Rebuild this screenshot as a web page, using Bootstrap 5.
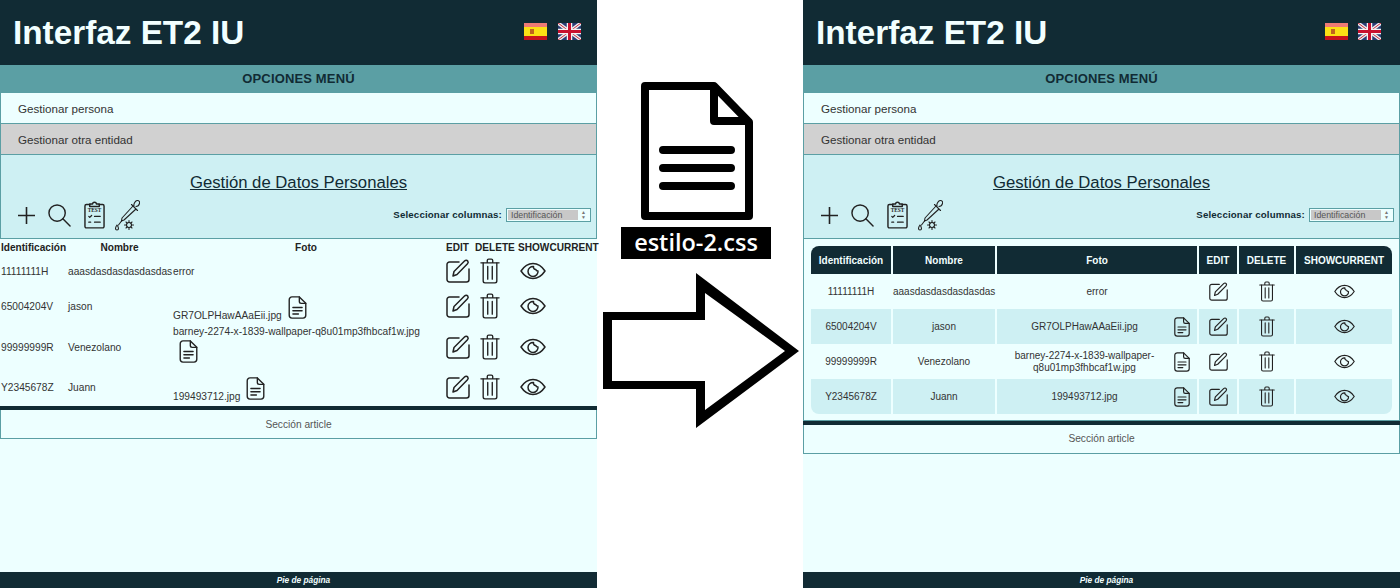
<!DOCTYPE html>
<html lang="es">
<head>
  <meta charset="UTF-8" />
  <meta name="viewport" content="width=device-width, initial-scale=1" />
  <title>Interfaz ET2 IU</title>
  <link href="https://cdn.jsdelivr.net/npm/bootstrap@5.3.6/dist/css/bootstrap.min.css" rel="stylesheet"/>

  <style>
    body {
      background-color: #fff;
      height: 588px;
      overflow: hidden;
      font-family: "Liberation Sans", Arial, sans-serif;
      font-size: 11px;
      color: #333;
    }

    .panel-ui { width: 597px; height: 588px; background-color: #edffff; }
    .mid-col { width: 206px; }

    .cabecera { height: 65px; background-color: #112b34; color: #f2ffff; padding: 0 16px 0 13px; }
    .cabecera h1 { font-size: 33.3px; font-weight: 700; margin: 0; }
    .banderas { gap: 11px; margin-top: -2px; }
    .cabecera-b { padding-right: 19px; }
    .cabecera-b .banderas { gap: 10px; }

    .titulo-menu { height: 28px; background-color: #5b9fa4; color: #112b34; font-size: 13px; font-weight: 700; letter-spacing: .15px; }
    .item-menu { height: 31px; padding: 1px 0 0 17px; border: 1px solid #5b9fa4; border-top: 0; font-size: 11.6px; }
    .item-gris { background-color: #d1d1d1; }

    .zona-gestion { height: 84px; background-color: #cef0f3; border: 1px solid #5b9fa4; border-top: 0; color: #112b34; }
    .zona-gestion h2 { font-size: 16.7px; font-weight: 400; text-decoration: underline; text-align: center; margin: 18px 0 9px; line-height: 19px; }
    .barra-iconos { padding: 0 5px 0 17px; }
    .barra-iconos .grupo { gap: 9px; margin-top: -2px; }
    .lado-selector { margin-top: -2px; }
    .selector-txt { font-size: 9.7px; font-weight: 700; letter-spacing: .15px; margin-right: 4px; }
    .selector { width: 85px; height: 14px; background: #edffff; border: 1px solid #5b9fa4; padding: 1px; font-size: 8.8px; color: #555; }
    .selector span { background: #c8c8c8; padding-left: 3px; line-height: 10px; }
    .selector i { width: 11px; font-style: normal; font-size: 5px; line-height: 5px; color: #777; text-align: center; }

    .tabla-vieja { width: 597px; border-collapse: collapse; font-size: 10.2px; table-layout: fixed; }
    .tabla-vieja th { font-size: 10.1px; padding: 0 1px; height: 17px; color: #222; }
    .tabla-vieja td { padding: 0 1px; vertical-align: middle; white-space: nowrap; }
    .tabla-vieja td:nth-child(-n+2), .tabla-vieja .fila-1 td:nth-child(3) { padding-top: 2px; }
    .tabla-vieja .fila-1 { height: 30px; }
    .tabla-vieja .fila-2 { height: 40px; }
    .tabla-vieja .fila-3 { height: 42px; }
    .tabla-vieja .fila-4 { height: 38px; }
    .col-id { width: 67px; }
    .col-nombre { width: 105px; }
    .col-foto { width: 273px; padding-right: 6px !important; }
    .col-edit { width: 29px; }
    .col-delete { width: 43px; }
    .col-show { width: 80px; }
    .celda-borrar { padding-left: 6px !important; }
    .celda-ojo { padding-left: 3px !important; }
    .tabla-vieja .foto-bajo { padding-top: 8px; }
    .tabla-vieja .foto-arriba { padding-bottom: 5px; line-height: 12px; }
    .fich-linea { vertical-align: baseline; margin-left: 6px; }
    .fich-abajo { display: block; margin: 2px 0 0 6px; }

    .raya { height: 4px; background-color: #112b34; flex: none; }
    .seccion { height: 29px; padding-top: 1px; border: 1px solid #5b9fa4; border-top: 0; font-size: 10.2px; color: #555; }
    .seccion-b { padding-top: 0; }

    .marco-tabla { padding: 7px 7px 6px; border: 1px solid #5b9fa4; border-top: 0; }
    .tabla-nueva { width: 100%; border-collapse: separate; border-spacing: 0; font-size: 10px; table-layout: fixed; }
    .tabla-nueva th { background-color: #112b34; color: #f2ffff; height: 28px; font-size: 10px; text-align: center; border-right: 2px solid #edffff; padding: 0; }
    .tabla-nueva th:first-child { border-top-left-radius: 8px; }
    .tabla-nueva th:last-child { border-top-right-radius: 8px; border-right: 0; }
    .tabla-nueva td { text-align: center; vertical-align: middle; padding: 0 2px; height: 35px; border-right: 2px solid #edffff; line-height: 12px; }
    .tabla-nueva td:last-child { border-right: 0; }
    .tabla-nueva tr:nth-child(even) td { background-color: #cef0f3; }
    .tabla-nueva tr:last-child td:first-child { border-bottom-left-radius: 8px; }
    .tabla-nueva tr:last-child td:last-child { border-bottom-right-radius: 8px; }
    .col2-id { width: 82px; }
    .col2-nombre { width: 104px; }
    .col2-foto { width: 202px; }
    .col2-edit { width: 40px; }
    .col2-delete { width: 57px; }
    .celda-foto { gap: 4px; padding-right: 5px; }
    .celda-foto span { flex: 1; }

    .pie { height: 16px; padding-left: 10px; background-color: #112b34; color: #f2ffff; font-size: 8.3px; font-weight: 700; font-style: italic; }

    .doc-grande { margin: 82px 0 0 44px; }
    .etiqueta-css { width: 150px; height: 32px; background: #000; color: #fff; font-family: "Open Sans", sans-serif; font-size: 23.5px; font-weight: 600; margin: 7px 0 14px 24px; }
    .flecha { margin-left: 6px; }
    .ico { fill: none; stroke: #222; stroke-width: 1.5; stroke-linecap: round; stroke-linejoin: round; }
    .ico-fino { stroke-width: 1.1; }
    .txt-test { font-family: "Liberation Serif", serif; font-size: 5.5px; font-weight: 700; fill: #222; stroke: none; }
  </style>
</head>

<body>
  <svg width="0" height="0" class="d-none">
    <symbol id="i-mas" viewBox="0 0 16 16"><path d="M8 0v16M0 8h16"/></symbol>
    <symbol id="i-lupa" viewBox="0 0 24 24"><circle cx="9.500" cy="9.500" r="8.500"/><path d="M15.500 15.500L23 23"/></symbol>
    <symbol id="i-test" viewBox="0 0 22 29"><path d="M6 3.500H2.500a1.500 1.500 0 0 0-1.500 1.500v21.500a1.500 1.500 0 0 0 1.500 1.500h17a1.500 1.500 0 0 0 1.500-1.500V5a1.500 1.500 0 0 0-1.500-1.500H16"/><path d="M6 5.500V3h3c0-2.500 4-2.500 4 0h3v2.500z"/><text class="txt-test" x="11" y="11.500" text-anchor="middle">TEST</text><path d="M5 16l1 1 2-2M11 16h6M5 22h2M11 22h6" stroke-width="1.300"/></symbol>
    <symbol id="i-pipeta" viewBox="0 0 26 32"><path d="M8 19L19 7l3 3-12 11-2.500 1zM17.500 5.500l6 6M20 7c-.5-2 1-5 3-5.500 2-.4 3 1.500 2.500 3-.4 1.500-2 3-3.500 3"/><path d="M7.500 22l-3 4"/><path d="M3 26c-2 2.500-2 5 0 5s2-2.500 0-5z"/><circle cx="15" cy="26" r="2.500"/><path d="M15 21.500v2M15 28.500v2M10.500 26h2M17.500 26h2M12 23l1.200 1.200M16.800 27.800L18 29M18 23l-1.200 1.200M13.200 27.800L12 29"/></symbol>
    <symbol id="i-editar" viewBox="0 0 24 24"><path d="M13 3H3.500A2.500 2.500 0 0 0 1 5.500v15A2.500 2.500 0 0 0 3.500 23h17a2.500 2.500 0 0 0 2.500-2.500V10"/><path d="M7 17l1-4.500L18.500 2c1-1 2.500-1 3.200 0s.6 2-.2 2.800L11 15.500z"/></symbol>
    <symbol id="i-borrar" viewBox="0 0 22 28"><path d="M1 5h20M8 5V2.500C8 1.500 8.500 1 9.500 1h3c1 0 1.500.5 1.500 1.500V5"/><path d="M3.500 5v20a2 2 0 0 0 2 2h11a2 2 0 0 0 2-2V5"/><path d="M8.500 9v14M13.500 9v14"/></symbol>
    <symbol id="i-ojo" viewBox="0 0 26 18"><path d="M1 9c3-4.500 7-7.500 12-7.500S22 4.500 25 9c-3 4.500-7 7.500-12 7.500S4 13.500 1 9z"/><path d="M13.500 4.500A5 5 0 1 0 18 9c-1.500 0-2-.5-2.200-1.500-1.500 0-2.500-1-2.300-3z"/></symbol>
    <symbol id="i-fichero" viewBox="0 0 20 25"><path d="M4 1h8l7 7v13a3 3 0 0 1-3 3H4a3 3 0 0 1-3-3V4a3 3 0 0 1 3-3z"/><path d="M12 1v5a2 2 0 0 0 2 2h5"/><path d="M5 12.500h10M5 16h10M5 19.500h6"/></symbol>
    <symbol id="b-es" viewBox="0 0 23 17"><rect width="23" height="17" fill="#c8141c"/><rect width="23" height="4" fill="#ef7a74"/><rect y="4" width="23" height="9" fill="#fbe014"/><rect x="6" y="6" width="4" height="5" fill="#c0641c"/></symbol>
    <symbol id="b-uk" viewBox="0 0 23 17"><rect width="23" height="17" fill="#2a3c74"/><path d="M0 0l23 17M23 0L0 17" stroke="#eee" stroke-width="3.500"/><path d="M0 0l23 17M23 0L0 17" stroke="#c8283c" stroke-width="1"/><path d="M11.500 0v17M0 8.500h23" stroke="#f4f4f4" stroke-width="5.500"/><path d="M11.500 0v17M0 8.500h23" stroke="#c8102e" stroke-width="3"/></symbol>
  </svg>

  <div class="d-flex">

    <!-- Antes -->
    <div class="panel-ui d-flex flex-column">
      <header class="cabecera d-flex justify-content-between align-items-center">
        <h1>Interfaz ET2 IU</h1>
        <div class="banderas d-flex">
          <svg width="23" height="17"><use href="#b-es"/></svg>
          <svg width="23" height="17"><use href="#b-uk"/></svg>
        </div>
      </header>
      <div class="titulo-menu d-flex align-items-center justify-content-center">OPCIONES MENÚ</div>
      <div class="item-menu d-flex align-items-center">Gestionar persona</div>
      <div class="item-menu item-gris d-flex align-items-center">Gestionar otra entidad</div>
      <section class="zona-gestion">
        <h2>Gestión de Datos Personales</h2>
        <div class="barra-iconos d-flex justify-content-between align-items-center">
          <div class="grupo d-flex align-items-center">
            <svg class="ico" width="17" height="17"><use href="#i-mas"/></svg>
            <svg class="ico ms-1" width="23" height="23"><use href="#i-lupa"/></svg>
            <svg class="ico ms-1" width="21" height="28"><use href="#i-test"/></svg>
            <svg class="ico ico-fino" width="26" height="32"><use href="#i-pipeta"/></svg>
          </div>
          <div class="lado-selector d-flex align-items-center">
            <span class="selector-txt">Seleccionar columnas:</span>
            <div class="selector d-flex">
              <span class="flex-grow-1">Identificación</span>
              <i class="d-flex flex-column justify-content-center">▲<br>▼</i>
            </div>
          </div>
        </div>
      </section>
      <table class="tabla-vieja">
        <thead>
          <tr>
            <th class="col-id">Identificación</th>
            <th class="col-nombre text-center">Nombre</th>
            <th class="col-foto text-center">Foto</th>
            <th class="col-edit">EDIT</th>
            <th class="col-delete">DELETE</th>
            <th class="col-show">SHOWCURRENT</th>
          </tr>
        </thead>
        <tbody>
          <tr class="fila-1">
            <td>11111111H</td><td>aaasdasdasdasdasdas</td><td>error</td>
            <td><svg class="ico" width="24" height="24"><use href="#i-editar"/></svg></td>
            <td class="celda-borrar"><svg class="ico" width="20" height="26"><use href="#i-borrar"/></svg></td>
            <td class="celda-ojo"><svg class="ico" width="26" height="18"><use href="#i-ojo"/></svg></td>
          </tr>
          <tr class="fila-2">
            <td>65004204V</td><td>jason</td><td class="foto-bajo">GR7OLPHawAAaEii.jpg<svg class="ico fich-linea" width="19" height="23"><use href="#i-fichero"/></svg></td>
            <td><svg class="ico" width="24" height="24"><use href="#i-editar"/></svg></td>
            <td class="celda-borrar"><svg class="ico" width="20" height="26"><use href="#i-borrar"/></svg></td>
            <td class="celda-ojo"><svg class="ico" width="26" height="18"><use href="#i-ojo"/></svg></td>
          </tr>
          <tr class="fila-3">
            <td>99999999R</td><td>Venezolano</td><td class="foto-arriba">barney-2274-x-1839-wallpaper-q8u01mp3fhbcaf1w.jpg<svg class="ico fich-abajo" width="19" height="23"><use href="#i-fichero"/></svg></td>
            <td><svg class="ico" width="24" height="24"><use href="#i-editar"/></svg></td>
            <td class="celda-borrar"><svg class="ico" width="20" height="26"><use href="#i-borrar"/></svg></td>
            <td class="celda-ojo"><svg class="ico" width="26" height="18"><use href="#i-ojo"/></svg></td>
          </tr>
          <tr class="fila-4">
            <td>Y2345678Z</td><td>Juann</td><td class="foto-bajo">199493712.jpg<svg class="ico fich-linea" width="19" height="23"><use href="#i-fichero"/></svg></td>
            <td><svg class="ico" width="24" height="24"><use href="#i-editar"/></svg></td>
            <td class="celda-borrar"><svg class="ico" width="20" height="26"><use href="#i-borrar"/></svg></td>
            <td class="celda-ojo"><svg class="ico" width="26" height="18"><use href="#i-ojo"/></svg></td>
          </tr>
        </tbody>
      </table>
      <div class="raya"></div>
      <div class="seccion d-flex align-items-center justify-content-center">Sección article</div>
      <footer class="pie mt-auto d-flex align-items-center justify-content-center">Pie de página</footer>
    </div>

    <!-- Centro -->
    <div class="mid-col d-flex flex-column align-items-start">
      <svg class="doc-grande" width="112" height="138" viewBox="0 0 112 138">
        <path d="M4 4h69l35 36v94H4z" fill="#fff" stroke="#000" stroke-width="8" stroke-linejoin="round"/>
        <path d="M73 4v35h35" fill="none" stroke="#000" stroke-width="8" stroke-linejoin="round"/>
        <path d="M22 68h68M22 86h68M22 104h68" stroke="#000" stroke-width="8" stroke-linecap="round"/>
      </svg>
      <div class="etiqueta-css d-flex align-items-center justify-content-center">estilo-2.css</div>
      <svg class="flecha" width="197" height="156" viewBox="0 0 197 156">
        <path fill-rule="evenodd" d="M0 39h93V0l103 78L93 155v-39H0zM9 47v61h93v29l80-59-80-58v27z"/>
      </svg>
    </div>

    <!-- Después -->
    <div class="panel-ui d-flex flex-column">
      <header class="cabecera cabecera-b d-flex justify-content-between align-items-center">
        <h1>Interfaz ET2 IU</h1>
        <div class="banderas d-flex">
          <svg width="23" height="17"><use href="#b-es"/></svg>
          <svg width="23" height="17"><use href="#b-uk"/></svg>
        </div>
      </header>
      <div class="titulo-menu d-flex align-items-center justify-content-center">OPCIONES MENÚ</div>
      <div class="item-menu d-flex align-items-center">Gestionar persona</div>
      <div class="item-menu item-gris d-flex align-items-center">Gestionar otra entidad</div>
      <section class="zona-gestion">
        <h2>Gestión de Datos Personales</h2>
        <div class="barra-iconos d-flex justify-content-between align-items-center">
          <div class="grupo d-flex align-items-center">
            <svg class="ico" width="17" height="17"><use href="#i-mas"/></svg>
            <svg class="ico ms-1" width="23" height="23"><use href="#i-lupa"/></svg>
            <svg class="ico ms-1" width="21" height="28"><use href="#i-test"/></svg>
            <svg class="ico ico-fino" width="26" height="32"><use href="#i-pipeta"/></svg>
          </div>
          <div class="lado-selector d-flex align-items-center">
            <span class="selector-txt">Seleccionar columnas:</span>
            <div class="selector d-flex">
              <span class="flex-grow-1">Identificación</span>
              <i class="d-flex flex-column justify-content-center">▲<br>▼</i>
            </div>
          </div>
        </div>
      </section>
      <div class="marco-tabla">
        <table class="tabla-nueva">
          <thead>
            <tr>
              <th class="col2-id">Identificación</th>
              <th class="col2-nombre">Nombre</th>
              <th class="col2-foto">Foto</th>
              <th class="col2-edit">EDIT</th>
              <th class="col2-delete">DELETE</th>
              <th>SHOWCURRENT</th>
            </tr>
          </thead>
          <tbody>
            <tr>
              <td>11111111H</td><td class="px-0">aaasdasdasdasdasdas</td><td>error</td>
              <td><svg class="ico" width="19" height="19"><use href="#i-editar"/></svg></td>
              <td><svg class="ico" width="16" height="21"><use href="#i-borrar"/></svg></td>
              <td><svg class="ico" width="21" height="15"><use href="#i-ojo"/></svg></td>
            </tr>
            <tr>
              <td>65004204V</td><td>jason</td>
              <td><div class="celda-foto d-flex align-items-center"><span>GR7OLPHawAAaEii.jpg</span><svg class="ico" width="16" height="20"><use href="#i-fichero"/></svg></div></td>
              <td><svg class="ico" width="19" height="19"><use href="#i-editar"/></svg></td>
              <td><svg class="ico" width="16" height="21"><use href="#i-borrar"/></svg></td>
              <td><svg class="ico" width="21" height="15"><use href="#i-ojo"/></svg></td>
            </tr>
            <tr>
              <td>99999999R</td><td>Venezolano</td>
              <td><div class="celda-foto d-flex align-items-center"><span>barney-2274-x-1839-wallpaper-q8u01mp3fhbcaf1w.jpg</span><svg class="ico" width="16" height="20"><use href="#i-fichero"/></svg></div></td>
              <td><svg class="ico" width="19" height="19"><use href="#i-editar"/></svg></td>
              <td><svg class="ico" width="16" height="21"><use href="#i-borrar"/></svg></td>
              <td><svg class="ico" width="21" height="15"><use href="#i-ojo"/></svg></td>
            </tr>
            <tr>
              <td>Y2345678Z</td><td>Juann</td>
              <td><div class="celda-foto d-flex align-items-center"><span>199493712.jpg</span><svg class="ico" width="16" height="20"><use href="#i-fichero"/></svg></div></td>
              <td><svg class="ico" width="19" height="19"><use href="#i-editar"/></svg></td>
              <td><svg class="ico" width="16" height="21"><use href="#i-borrar"/></svg></td>
              <td><svg class="ico" width="21" height="15"><use href="#i-ojo"/></svg></td>
            </tr>
          </tbody>
        </table>
      </div>
      <div class="raya"></div>
      <div class="seccion seccion-b d-flex align-items-center justify-content-center">Sección article</div>
      <footer class="pie mt-auto d-flex align-items-center justify-content-center">Pie de página</footer>
    </div>
  </div>

  <script src="https://cdn.jsdelivr.net/npm/bootstrap@5.3.6/dist/js/bootstrap.bundle.min.js"></script>
</body>
</html>
